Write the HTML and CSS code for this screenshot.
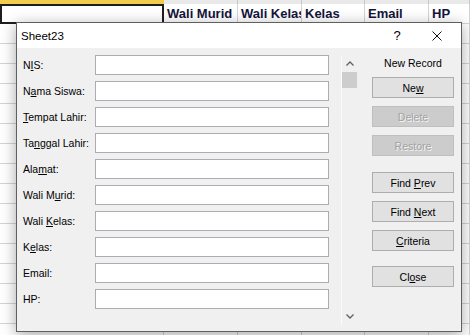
FILE: index.html
```html
<html lang="id">

<head>
    <meta charset="UTF-8">
    <meta name="viewport" content="width=device-width, initial-scale=1.0">
    <title>Sheet23</title>
    <link rel="stylesheet" href="styles.css">
</head>

<body>
    <div class="sheet">
        <div class="strip">
            <div class="strip-sel"></div>
            <div></div>
            <div></div>
            <div></div>
            <div></div>
            <div></div>
        </div>
        <div class="row head">
            <div class="cell sel"></div>
            <div class="cell">Wali Murid</div>
            <div class="cell">Wali Kelas</div>
            <div class="cell">Kelas</div>
            <div class="cell">Email</div>
            <div class="cell">HP</div>
        </div>
        <div class="row"><div class="cell"></div><div class="cell"></div><div class="cell"></div><div class="cell"></div><div class="cell"></div><div class="cell"></div></div>
        <div class="row"><div class="cell"></div><div class="cell"></div><div class="cell"></div><div class="cell"></div><div class="cell"></div><div class="cell"></div></div>
        <div class="row"><div class="cell"></div><div class="cell"></div><div class="cell"></div><div class="cell"></div><div class="cell"></div><div class="cell"></div></div>
        <div class="row"><div class="cell"></div><div class="cell"></div><div class="cell"></div><div class="cell"></div><div class="cell"></div><div class="cell"></div></div>
        <div class="row"><div class="cell"></div><div class="cell"></div><div class="cell"></div><div class="cell"></div><div class="cell"></div><div class="cell"></div></div>
        <div class="row"><div class="cell"></div><div class="cell"></div><div class="cell"></div><div class="cell"></div><div class="cell"></div><div class="cell"></div></div>
        <div class="row"><div class="cell"></div><div class="cell"></div><div class="cell"></div><div class="cell"></div><div class="cell"></div><div class="cell"></div></div>
        <div class="row"><div class="cell"></div><div class="cell"></div><div class="cell"></div><div class="cell"></div><div class="cell"></div><div class="cell"></div></div>
        <div class="row"><div class="cell"></div><div class="cell"></div><div class="cell"></div><div class="cell"></div><div class="cell"></div><div class="cell"></div></div>
        <div class="row"><div class="cell"></div><div class="cell"></div><div class="cell"></div><div class="cell"></div><div class="cell"></div><div class="cell"></div></div>
        <div class="row"><div class="cell"></div><div class="cell"></div><div class="cell"></div><div class="cell"></div><div class="cell"></div><div class="cell"></div></div>
        <div class="row"><div class="cell"></div><div class="cell"></div><div class="cell"></div><div class="cell"></div><div class="cell"></div><div class="cell"></div></div>
        <div class="row"><div class="cell"></div><div class="cell"></div><div class="cell"></div><div class="cell"></div><div class="cell"></div><div class="cell"></div></div>
        <div class="row"><div class="cell"></div><div class="cell"></div><div class="cell"></div><div class="cell"></div><div class="cell"></div><div class="cell"></div></div>
        <div class="row"><div class="cell"></div><div class="cell"></div><div class="cell"></div><div class="cell"></div><div class="cell"></div><div class="cell"></div></div>
        <div class="row"><div class="cell"></div><div class="cell"></div><div class="cell"></div><div class="cell"></div><div class="cell"></div><div class="cell"></div></div>
    </div>

    <div class="dialog">
        <div class="titlebar">
            <span class="title">Sheet23</span>
            <span class="help">?</span>
            <span class="close">
                <svg width="10" height="10" viewBox="0 0 10 10">
                    <path d="M0.5 0.5 L9.5 9.5 M9.5 0.5 L0.5 9.5" stroke="#111" stroke-width="1" fill="none" />
                </svg>
            </span>
        </div>
        <div class="body">
            <div class="fields">
                <div class="field"><label>N<u>I</u>S:</label><div class="input"></div></div>
                <div class="field"><label>N<u>a</u>ma Siswa:</label><div class="input"></div></div>
                <div class="field"><label><u>T</u>empat Lahir:</label><div class="input"></div></div>
                <div class="field"><label>Ta<u>n</u>ggal Lahir:</label><div class="input"></div></div>
                <div class="field"><label>Ala<u>m</u>at:</label><div class="input"></div></div>
                <div class="field"><label>Wali M<u>u</u>rid:</label><div class="input"></div></div>
                <div class="field"><label>Wali <u>K</u>elas:</label><div class="input"></div></div>
                <div class="field"><label>K<u>e</u>las:</label><div class="input"></div></div>
                <div class="field"><label>Email:</label><div class="input"></div></div>
                <div class="field"><label>HP:</label><div class="input"></div></div>
            </div>
            <div class="scroll">
                <div class="arrow">
                    <svg width="8" height="5" viewBox="0 0 8 5">
                        <path d="M0.5 4.5 L4 1 L7.5 4.5" stroke="#606060" stroke-width="1.3" fill="none" />
                    </svg>
                </div>
                <div class="thumb"></div>
                <div class="track"></div>
                <div class="arrow">
                    <svg width="8" height="5" viewBox="0 0 8 5">
                        <path d="M0.5 0.5 L4 4 L7.5 0.5" stroke="#606060" stroke-width="1.3" fill="none" />
                    </svg>
                </div>
            </div>
            <div class="side">
                <div class="recno">New Record</div>
                <button type="button" class="btn">Ne<u>w</u></button>
                <button type="button" class="btn" disabled>Delete</button>
                <button type="button" class="btn" disabled>Restore</button>
                <button type="button" class="btn gap">Find <u>P</u>rev</button>
                <button type="button" class="btn">Find <u>N</u>ext</button>
                <button type="button" class="btn"><u>C</u>riteria</button>
                <button type="button" class="btn gap2">Cl<u>o</u>se</button>
            </div>
        </div>
    </div>
</body>

</html>
```

FILE: styles.css
```css
html, body {
    margin: 0;
    padding: 0;
    background-color: white;
    overflow: hidden;
}

body {
    width: 470px;
    height: 335px;
    position: relative;
    font-family: "Liberation Sans", Arial, sans-serif;
}

/* spreadsheet behind the dialog */
.sheet {
    width: 470px;
}

.strip,
.row {
    display: grid;
    grid-template-columns: 164px 74px 64px 63px 64px 1fr;
}

.strip {
    height: 4px;
    background-color: #e9e9e9;
}

.strip > div {
    border-right: 1px solid #c8c8c8;
}

.strip .strip-sel {
    background-color: #f2cc4c;
    border-right: none;
}

.row {
    height: 20px;
}

.cell {
    box-sizing: border-box;
    border-right: 1px solid #d4d4d4;
    border-bottom: 1px solid #d4d4d4;
    overflow: hidden;
    white-space: nowrap;
}

.head .cell {
    font-weight: bold;
    font-size: 13px;
    line-height: 19px;
    color: #14143c;
    padding-left: 3px;
}

.head .sel {
    border: none;
    box-shadow: inset 0 0 0 2px #1e1e1e;
}

/* the record form */
.dialog {
    position: absolute;
    left: 16px;
    top: 22px;
    width: 446px;
    height: 310px;
    box-sizing: border-box;
    border: 1px solid #5f5f5f;
    background-color: #f0f0f0;
    box-shadow: 0 3px 14px rgba(0, 0, 0, 0.35);
    display: flex;
    flex-direction: column;
}

.titlebar {
    height: 25px;
    background-color: white;
    display: flex;
    align-items: center;
    flex-shrink: 0;
}

.title {
    padding-left: 4px;
    font-size: 11.5px;
    color: #000;
    flex: 1;
}

.help {
    font-size: 13px;
    width: 20px;
    text-align: center;
    margin-right: 25px;
}

.close {
    width: 10px;
    height: 10px;
    margin-right: 19px;
    display: flex;
}

.body {
    display: flex;
    padding: 7px 0 0 6px;
    font-size: 10.5px;
    color: #000;
}

.fields {
    display: flex;
    flex-direction: column;
    gap: 6px;
}

.field {
    display: flex;
    align-items: center;
    height: 20px;
}

.field label {
    width: 72px;
}

.input {
    width: 234px;
    height: 20px;
    box-sizing: border-box;
    border: 1px solid #acacb2;
    background-color: white;
}

.scroll {
    margin-left: 12px;
    width: 16px;
    height: 270px;
    box-sizing: border-box;
    border-left: 1px solid #fbfbfb;
    display: flex;
    flex-direction: column;
}

.scroll .arrow {
    height: 17px;
    display: flex;
    align-items: center;
    justify-content: center;
}

.scroll .thumb {
    height: 16px;
    width: 15px;
    background-color: #cdcdcd;
}

.scroll .track {
    flex: 1;
}

.side {
    margin-left: 15px;
    width: 82px;
    display: flex;
    flex-direction: column;
}

.recno {
    height: 16px;
    line-height: 16px;
    text-align: center;
    margin-bottom: 6px;
}

.btn {
    height: 21px;
    margin: 0 0 8px 0;
    padding: 0;
    box-sizing: border-box;
    border: 1px solid #adadad;
    background-color: #e1e1e1;
    font-family: inherit;
    font-size: 10.5px;
    color: #000;
    text-align: center;
}

.btn:disabled {
    background-color: #cccccc;
    border-color: #bfbfbf;
    color: #a2a2a2;
    text-shadow: 1px 1px 0 #f4f4f4;
}

.btn.gap {
    margin-top: 8px;
}

.btn.gap2 {
    margin-top: 7px;
}
```
